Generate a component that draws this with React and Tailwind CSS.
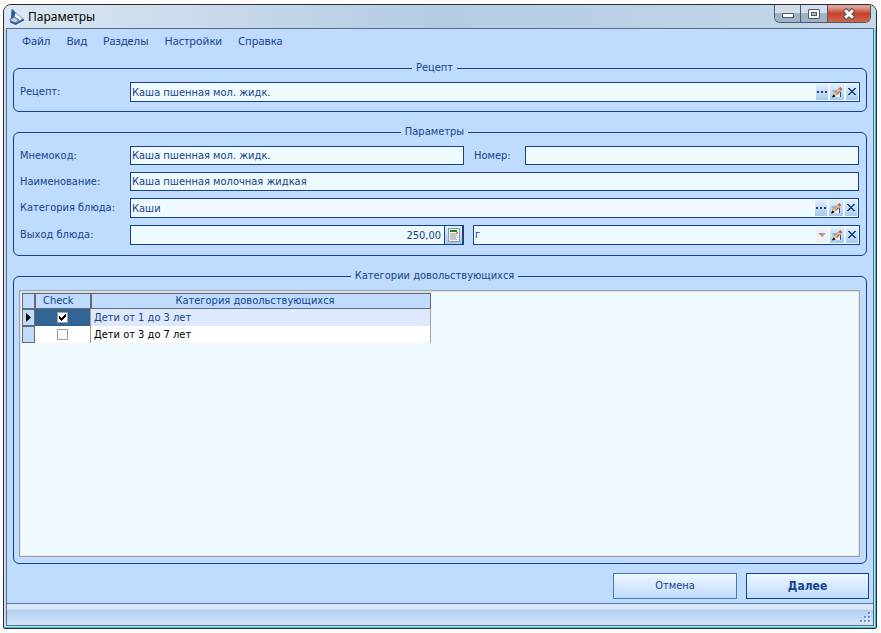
import React, { useState } from 'react';

const initialCategories = [
  { id: 1, name: 'Дети от 1 до 3 лет', checked: true },
  { id: 2, name: 'Дети от 3 до 7 лет', checked: false },
];

const menuItems = ['Файл', 'Вид', 'Разделы', 'Настройки', 'Справка'];

const AppIcon = () => (
  <svg width="16" height="16" viewBox="0 0 16 16" aria-hidden="true">
    <path d="M3.5 1 L14 10 L11 12 L3 10 Z" fill="#f4f9ff" stroke="#4a7ab8" strokeWidth="0.8" />
    <path d="M2.5 0.5 L4 0.5 L6.5 4 L5 9 L2 10 Z" fill="#2458a4" />
    <path d="M0.5 10.5 L5 8 L10 10.5 L6.5 14 Z" fill="#a9b6c6" stroke="#4a678f" strokeWidth="0.8" />
    <path d="M1 12.5 L6.5 15 L15 10.5" fill="none" stroke="#2458a4" strokeWidth="1.6" />
    <path d="M2.5 11 L6.5 12.5 M4 10 L8 11.5" stroke="#e6edf5" strokeWidth="0.8" />
  </svg>
);

const DotsIcon = () => (
  <svg width="12" height="16" viewBox="0 0 12 16" shapeRendering="crispEdges" aria-hidden="true">
    <path d="M1 7h2v2H1z M5 7h2v2H5z M9 7h2v2H9z" fill="#15428b" />
  </svg>
);

const PencilIcon = () => (
  <svg width="14" height="16" viewBox="0 0 14 16" aria-hidden="true">
    <path d="M2 6h6L4 10z" fill="#8fb4ee" />
    <path d="M5 13L11 7v6z" fill="#f4f6fb" />
    <path d="M10.5 8v5" stroke="#3d4f86" strokeWidth="1" />
    <path d="M5.5 10L9.5 6" stroke="#8a6238" strokeWidth="3.4" />
    <path d="M5.2 9.7L9.2 5.7" stroke="#edb568" strokeWidth="2" />
    <path d="M9.4 6L11.4 4" stroke="#c8655a" strokeWidth="3" />
    <path d="M8.6 6.8L9.4 6" stroke="#c9ced6" strokeWidth="3" />
    <path d="M4.5 8.5L7 11L3.5 13H2.5z" fill="#f0d0a4" />
    <path d="M3.5 10.3L5.5 12.2L3.5 13.2H2z" fill="#000" />
  </svg>
);

const CrossIcon = () => (
  <svg width="12" height="16" viewBox="0 0 12 16" shapeRendering="crispEdges" aria-hidden="true">
    <path
      d="M2 4h2v1H2z M8 4h2v1H8z M3 5h2v1H3z M7 5h2v1H7z M4 6h4v1H4z M5 7h2v1H5z M4 8h4v1H4z M3 9h2v1H3z M7 9h2v1H7z M2 10h2v1H2z M8 10h2v1H8z"
      fill="#15428b"
    />
  </svg>
);

const CalcIcon = () => (
  <svg width="12" height="14" viewBox="0 0 12 14" shapeRendering="crispEdges" aria-hidden="true">
    <rect x="0" y="0" width="12" height="14" fill="#8f9a9a" />
    <rect x="1" y="1" width="10" height="12" fill="#f2f2ee" />
    <rect x="2" y="2" width="7" height="2" fill="#1f8a1f" />
    <rect x="2" y="5" width="6" height="7" fill="#c4c8cc" />
    <rect x="8" y="4" width="2" height="2" fill="#e88a8a" />
    <path d="M8 7h1v1H8z M9 9h1v1H9z M8 11h1v1H8z" fill="#b9b2d8" />
  </svg>
);

const iconButton = 'flex h-4 shrink-0 items-center justify-center bg-linear-to-b from-[#e3effc] to-[#a9c9ea]';

const EditButtons = () => (
  <>
    <button type="button" aria-label="Изменить" className={`${iconButton} w-[14px]`}>
      <PencilIcon />
    </button>
    <button type="button" aria-label="Очистить" className={`${iconButton} w-3`}>
      <CrossIcon />
    </button>
  </>
);

const inputClass = 'h-full w-full min-w-0 flex-1 bg-transparent outline-none';

const LookupField = ({ id, defaultValue }) => (
  <div className="flex h-5 min-w-0 flex-1 items-center gap-[2px] border border-[#15428b] bg-[#effaff] px-px">
    <input id={id} type="text" defaultValue={defaultValue} className={inputClass} />
    <button type="button" aria-label="Выбрать" className={`${iconButton} w-3`}>
      <DotsIcon />
    </button>
    <EditButtons />
  </div>
);

const TextField = ({ id, defaultValue }) => (
  <input
    id={id}
    type="text"
    defaultValue={defaultValue}
    className="h-[19px] w-full min-w-0 flex-1 border border-[#15428b] bg-[#effaff] px-px outline-none"
  />
);

const FieldLabel = ({ htmlFor, children }) => (
  <label htmlFor={htmlFor} className="w-[111px] shrink-0 pl-px leading-4">
    {children}
  </label>
);

const Group = ({ title, className = '', children }) => (
  <fieldset className={`min-w-0 rounded-md border border-[#15428b] pr-4 pl-[5px] ${className}`}>
    <legend className="mx-auto px-1 leading-4">{title}</legend>
    <div className="-mr-[10px] flex h-full flex-col gap-[7px] pt-[6px]">{children}</div>
  </fieldset>
);

const TitleBar = () => (
  <header className="flex h-[23px] items-start bg-linear-to-r from-[#dbe7f2] via-[#b4cbe3] to-[#c5d8ea]">
    <div className="flex h-full flex-1 items-center gap-[3px] pl-[5px]">
      <AppIcon />
      <h1 className="font-[family-name:'Noto_Sans',sans-serif] text-[12px] leading-4 text-black">Параметры</h1>
    </div>
    <div className="mr-[5px] flex h-[18px] overflow-hidden rounded-b-md border border-t-0 border-[#4b5a6c]">
      <button
        type="button"
        aria-label="Свернуть"
        className="flex w-[26px] items-center justify-center border-r border-[#4b5a6c] bg-linear-to-b from-[#d3deea] from-45% to-[#9fb2c6] to-50%"
      >
        <svg width="12" height="12" viewBox="0 0 12 12" aria-hidden="true">
          <rect x="0.5" y="5.5" width="11" height="4" rx="0.5" fill="#fff" stroke="#535666" />
        </svg>
      </button>
      <button
        type="button"
        aria-label="Развернуть"
        className="flex w-[27px] items-center justify-center border-r border-[#4b5a6c] bg-linear-to-b from-[#d3deea] from-45% to-[#9fb2c6] to-50%"
      >
        <svg width="12" height="12" viewBox="0 0 12 12" aria-hidden="true">
          <rect x="0.5" y="1.5" width="11" height="9" rx="0.5" fill="#fff" stroke="#535666" />
          <rect x="3.5" y="4.5" width="5" height="3" fill="#a9bccf" stroke="#535666" />
        </svg>
      </button>
      <button
        type="button"
        aria-label="Закрыть"
        className="flex w-[42px] items-center justify-center bg-linear-to-b from-[#e3a296] from-10% via-[#c4432c] via-50% to-[#d0664a]"
      >
        <svg width="14" height="12" viewBox="0 0 14 12" aria-hidden="true">
          <path d="M2.5 1.5L11.5 10.5M11.5 1.5L2.5 10.5" stroke="#535666" strokeWidth="5" />
          <path d="M3.2 2.2L10.8 9.8M10.8 2.2L3.2 9.8" stroke="#fff" strokeWidth="3" />
        </svg>
      </button>
    </div>
  </header>
);

const CategoriesTable = () => {
  const [categories, setCategories] = useState(initialCategories);
  const [selectedId, setSelectedId] = useState(1);

  const handleToggle = (id) => {
    setCategories(categories.map((c) => (c.id === id ? { ...c, checked: !c.checked } : c)));
  };

  return (
    <table className="ml-px w-[409px] table-fixed border-separate border-spacing-0 border-t border-[#bfdbff]">
      <colgroup>
        <col className="w-[13px]" />
        <col className="w-14" />
        <col />
      </colgroup>
      <thead>
        <tr className="h-4 bg-[#bfdbff]">
          <th className="border border-[#6a6a6a] p-0" />
          <th className="border border-[#6a6a6a] p-0 pl-[7px] text-left leading-[14px] font-normal">Check</th>
          <th className="border border-[#6a6a6a] p-0 pr-3 text-center leading-[14px] font-normal">
            Категория довольствующихся
          </th>
        </tr>
      </thead>
      <tbody>
        {categories.map((category) => {
          const selected = category.id === selectedId;
          return (
            <tr key={category.id} className="h-[17px]" onClick={() => setSelectedId(category.id)}>
              <td className="border border-[#6a6a6a] bg-[#bfdbff] p-0">
                {selected && (
                  <svg width="9" height="9" viewBox="0 0 9 9" className="mx-auto" aria-hidden="true">
                    <path d="M2 0v9l5-4.5z" fill="#000" />
                  </svg>
                )}
              </td>
              <td className={`border-r border-[#a0a0a0] p-0 ${selected ? 'bg-[#316395]' : 'bg-white'}`}>
                <div className="relative mx-auto h-[11px] w-[11px]">
                  <input
                    id={`category-${category.id}`}
                    type="checkbox"
                    checked={category.checked}
                    onChange={() => handleToggle(category.id)}
                    className="block h-[11px] w-[11px] appearance-none border border-[#a0a0a0] bg-white"
                  />
                  {category.checked && (
                    <svg
                      width="11"
                      height="11"
                      viewBox="0 0 11 11"
                      shapeRendering="crispEdges"
                      className="pointer-events-none absolute inset-0"
                      aria-hidden="true"
                    >
                      <path
                        d="M2 4h1v3H2z M3 5h1v3H3z M4 6h1v3H4z M5 5h1v3H5z M6 4h1v3H6z M7 3h1v3H7z M8 2h1v3H8z"
                        fill="#000"
                      />
                    </svg>
                  )}
                </div>
              </td>
              <td
                className={`border-r border-[#a0a0a0] p-0 pl-[3px] leading-4 ${
                  selected ? 'bg-[#dde9ff]' : 'bg-white text-black'
                }`}
              >
                <label htmlFor={`category-${category.id}`}>{category.name}</label>
              </td>
            </tr>
          );
        })}
      </tbody>
    </table>
  );
};

const App = () => {
  return (
    <div className="flex min-h-screen bg-[#fffbfb] pt-1 pr-1 pb-1 pl-[3px] font-[family-name:'DejaVu_Sans_Condensed','DejaVu_Sans',sans-serif] text-[11px] text-[#15428b]">
      <div className="flex flex-1 flex-col overflow-hidden rounded-t-lg rounded-b-xs border border-[#20303c] bg-[#c9dcee]">
        <TitleBar />
        <div className="flex flex-1 border-r border-b border-[#2fc3e8] pr-px pb-px pl-[2px]">
          <div className="flex flex-1 flex-col border border-[#5d6b78] bg-[#bfdbff]">
            <nav className="flex h-[31px] gap-4 pt-1 pl-[15px] font-[family-name:'Noto_Sans',sans-serif]">
              {menuItems.map((item) => (
                <button key={item} type="button" className="h-4 leading-4">
                  {item}
                </button>
              ))}
            </nav>

            <form className="flex flex-1 flex-col" onSubmit={(e) => e.preventDefault()}>
              <div className="flex flex-1 flex-col gap-3 px-[6px]">
                <Group title="Рецепт" className="pb-[9px]">
                  <div className="flex items-center">
                    <FieldLabel htmlFor="recipe">Рецепт:</FieldLabel>
                    <LookupField id="recipe" defaultValue="Каша пшенная мол. жидк." />
                  </div>
                </Group>

                <Group title="Параметры" className="pb-[10px]">
                  <div className="flex items-center pr-px">
                    <FieldLabel htmlFor="code">Мнемокод:</FieldLabel>
                    <div className="flex flex-1 items-center">
                      <TextField id="code" defaultValue="Каша пшенная мол. жидк." />
                      <label htmlFor="number" className="w-[61px] shrink-0 pl-[10px] leading-4">
                        Номер:
                      </label>
                      <TextField id="number" defaultValue="" />
                    </div>
                  </div>
                  <div className="flex items-center pr-px">
                    <FieldLabel htmlFor="name">Наименование:</FieldLabel>
                    <TextField id="name" defaultValue="Каша пшенная молочная жидкая" />
                  </div>
                  <div className="flex items-center pr-px">
                    <FieldLabel htmlFor="category">Категория блюда:</FieldLabel>
                    <LookupField id="category" defaultValue="Каши" />
                  </div>
                  <div className="flex items-center">
                    <FieldLabel htmlFor="output">Выход блюда:</FieldLabel>
                    <div className="grid flex-1 grid-cols-[334fr_387fr] items-center gap-[9px]">
                      <div className="flex h-5 border border-[#15428b] bg-[#effaff]">
                        <input
                          id="output"
                          type="text"
                          defaultValue="250,00"
                          className={`${inputClass} pr-[3px] text-right`}
                        />
                        <button
                          type="button"
                          aria-label="Калькулятор"
                          className="flex w-[19px] items-center justify-center border-r border-l border-[#15428b] bg-linear-to-b from-[#e3effc] to-[#a9c9ea]"
                        >
                          <CalcIcon />
                        </button>
                      </div>
                      <div className="flex h-5 min-w-0 items-center gap-[2px] border border-[#15428b] bg-[#effaff] px-px">
                        <div className="relative flex h-full flex-1 items-center">
                          <select
                            aria-label="Единица измерения"
                            defaultValue="г"
                            className="h-full w-full appearance-none bg-transparent outline-none"
                          >
                            <option>г</option>
                          </select>
                          <span className="pointer-events-none absolute right-0 flex h-4 w-3 items-center justify-center bg-[#f0f0f0]">
                            <svg width="8" height="4" viewBox="0 0 8 4" aria-hidden="true">
                              <path d="M0 0h8L4 4z" fill="#a0a0a0" />
                            </svg>
                          </span>
                        </div>
                        <EditButtons />
                      </div>
                    </div>
                  </div>
                </Group>

                <Group title="Категории довольствующихся" className="flex-1 pb-[6px]">
                  <div className="min-h-24 flex-1 border border-[#a0a0a0] bg-[#effaff]">
                    <div className="h-full border border-[#e3e3e3]">
                      <CategoriesTable />
                    </div>
                  </div>
                </Group>
              </div>

              <div className="flex justify-end gap-[9px] pt-[9px] pr-1 pb-1">
                <button
                  type="button"
                  className="h-[26px] w-[124px] border border-[#4779b5] bg-linear-to-b from-[#eef7ff] to-[#bfdbff]"
                >
                  Отмена
                </button>
                <button
                  type="submit"
                  className="h-[26px] w-[123px] border border-[#15428b] bg-linear-to-b from-[#eef7ff] to-[#bfdbff] text-[12px] font-bold"
                >
                  Далее
                </button>
              </div>
            </form>

            <footer className="flex h-[22px] items-end justify-end border-t border-[#567db0] bg-linear-to-b from-[#d7e6f9] from-25% via-[#b0cdf0] via-30% to-[#d3e3f8]">
              <svg width="13" height="13" viewBox="0 0 13 13" shapeRendering="crispEdges" aria-hidden="true">
                <path
                  d="M9 1h2v2H9z M5 5h2v2H5z M9 5h2v2H9z M1 9h2v2H1z M5 9h2v2H5z M9 9h2v2H9z"
                  fill="#fff"
                />
                <path
                  d="M8 0h2v2H8z M4 4h2v2H4z M8 4h2v2H8z M0 8h2v2H0z M4 8h2v2H4z M8 8h2v2H8z"
                  fill="#6591cd"
                />
              </svg>
            </footer>
          </div>
        </div>
      </div>
    </div>
  );
};

export default App;
